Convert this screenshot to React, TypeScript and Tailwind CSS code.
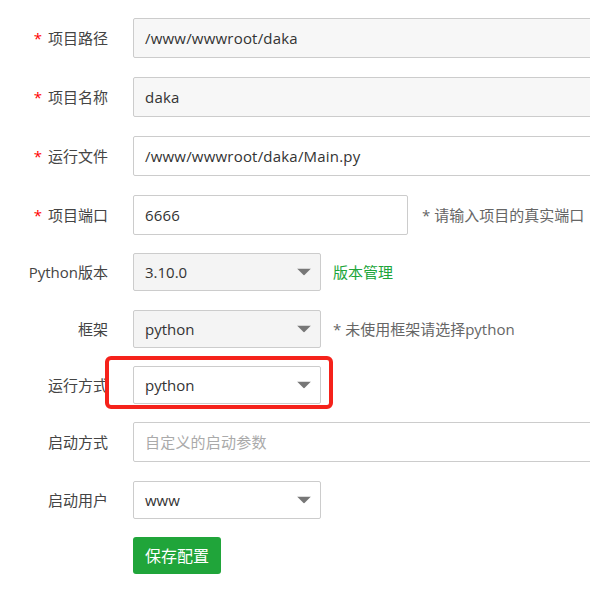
const font = { fontFamily: '"Open Sans", "Noto Sans CJK SC", sans-serif' };

function Label({ text, required }: { text: string; required?: boolean }) {
  return (
    <div className="w-[108px] shrink-0 text-right text-[15px] text-[#444]">
      {required && <span className="mr-[6px] text-[#f00]">*</span>}
      {text}
    </div>
  );
}

function Caret() {
  return (
    <svg width="14" height="7" viewBox="0 0 14 7" className="absolute right-[9px] top-1/2 -translate-y-1/2">
      <path d="M0 0h14L7 7z" fill="#777" />
    </svg>
  );
}

function Select({ value, disabled }: { value: string; disabled?: boolean }) {
  return (
    <div
      className={`relative flex h-[38px] w-[188px] items-center rounded-[2px] border border-[#ccc] pl-[11px] text-[15px] text-[#333] ${
        disabled ? 'bg-[#f4f4f4]' : 'bg-white'
      }`}
    >
      {value}
      <Caret />
    </div>
  );
}

function Input({ value, placeholder, readOnly, className = 'w-[470px]' }: { value?: string; placeholder?: string; readOnly?: boolean; className?: string }) {
  return (
    <div
      className={`flex h-[40px] shrink-0 items-center rounded-[2px] border border-[#ccc] pl-[11px] text-[15px] tracking-[0.2px] ${
        readOnly ? 'bg-[#f7f7f7]' : 'bg-white'
      } ${value ? 'text-[#333]' : 'text-[#aaa]'} ${className}`}
    >
      {value ?? placeholder}
    </div>
  );
}

export default function App() {
  return (
    <div className="h-[595px] w-[590px] overflow-hidden bg-white pt-[18px]" style={font}>
      <div className="flex items-center">
        <Label text="项目路径" required />
        <div className="ml-[25px]">
          <Input value="/www/wwwroot/daka" readOnly />
        </div>
      </div>

      <div className="mt-[19px] flex items-center">
        <Label text="项目名称" required />
        <div className="ml-[25px]">
          <Input value="daka" readOnly />
        </div>
      </div>

      <div className="mt-[19px] flex items-center">
        <Label text="运行文件" required />
        <div className="ml-[25px]">
          <Input value="/www/wwwroot/daka/Main.py" />
        </div>
      </div>

      <div className="mt-[19px] flex items-center">
        <Label text="项目端口" required />
        <div className="ml-[25px]">
          <Input value="6666" className="w-[275px]" />
        </div>
        <span className="ml-[14px] text-[15px] text-[#666]">* 请输入项目的真实端口</span>
      </div>

      <div className="mt-[18px] flex items-center">
        <Label text="Python版本" />
        <div className="ml-[25px]">
          <Select value="3.10.0" disabled />
        </div>
        <a className="ml-[12px] text-[15px] text-[#20a53a]">版本管理</a>
      </div>

      <div className="mt-[19px] flex items-center">
        <Label text="框架" />
        <div className="ml-[25px]">
          <Select value="python" disabled />
        </div>
        <span className="ml-[12px] text-[15px] text-[#666]">* 未使用框架请选择python</span>
      </div>

      <div className="mt-[18px] flex items-center">
        <Label text="运行方式" />
        <div className="relative ml-[25px]">
          <Select value="python" />
          <div className="pointer-events-none absolute -bottom-[5px] -left-[28px] -right-[12px] -top-[10px] rounded-[6px] border-4 border-[#f5221b]" />
        </div>
      </div>

      <div className="mt-[18px] flex items-center">
        <Label text="启动方式" />
        <div className="ml-[25px]">
          <Input placeholder="自定义的启动参数" />
        </div>
      </div>

      <div className="mt-[19px] flex items-center">
        <Label text="启动用户" />
        <div className="ml-[25px]">
          <Select value="www" />
        </div>
      </div>

      <div className="ml-[133px] mt-[18px]">
        <button className="h-[37px] w-[88px] rounded-[3px] bg-[#20a53a] text-[16px] text-white">保存配置</button>
      </div>
    </div>
  );
}
